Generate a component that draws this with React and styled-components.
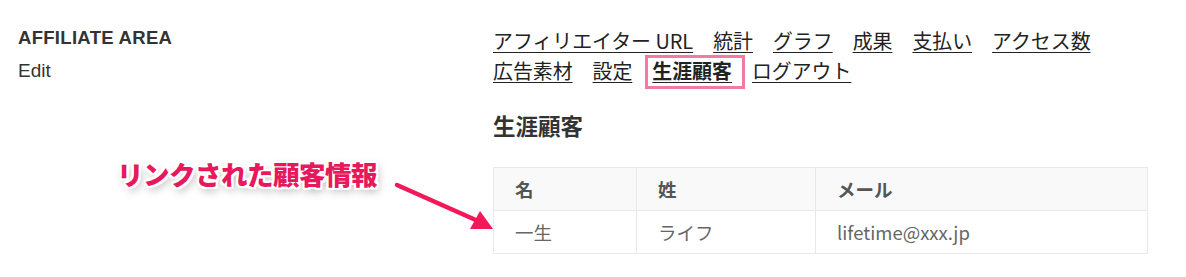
import React from 'react';
import styled, { createGlobalStyle } from 'styled-components';

const GlobalStyle = createGlobalStyle`
  html, body {
    margin: 0;
    padding: 0;
    background: #fff;
  }
  body {
    font-family: "Liberation Sans", "Noto Sans CJK JP", sans-serif;
    color: #333;
  }
  *, *::before, *::after {
    box-sizing: border-box;
  }
`;

const jp = `"Noto Sans CJK JP", "Liberation Sans", sans-serif`;

const Page = styled.div`
  position: relative;
  display: flex;
  width: 1186px;
  height: 277px;
  overflow: hidden;
`;

const Sidebar = styled.aside`
  width: 475px;
  flex-shrink: 0;
  margin-left: 18px;
  padding-top: 26px;
`;

const SideTitle = styled.h3`
  margin: 0;
  font-size: 18.5px;
  font-weight: 700;
  letter-spacing: 0.3px;
  line-height: 24px;
  color: #333;
`;

const SideLink = styled.div`
  margin-top: 9px;
  font-size: 19px;
  line-height: 24px;
  color: #333;
`;

const Main = styled.main`
  width: 654px;
  flex-shrink: 0;
  padding-top: 26px;
`;

const Nav = styled.nav`
  display: flex;
  flex-wrap: wrap;
  column-gap: 20px;
  width: 640px;
  font-family: ${jp};
  font-size: 19.9px;
  line-height: 30px;
`;

const NavLink = styled.a`
  position: relative;
  color: #222;
  text-decoration: underline;
  text-underline-offset: 3px;
  text-decoration-thickness: 1px;
  font-weight: ${({ $active }) => ($active ? 700 : 400)};

  &::after {
    content: '';
    display: ${({ $active }) => ($active ? 'block' : 'none')};
    position: absolute;
    left: -7px;
    right: -13px;
    top: -1px;
    bottom: -3px;
    border: 3px solid #f27aa3;
  }
`;

const Heading = styled.h2`
  margin: 23px 0 0;
  font-family: ${jp};
  font-size: 22.5px;
  font-weight: 700;
  line-height: 32px;
  color: #333;
`;

const Table = styled.table`
  margin-top: 26px;
  width: 654px;
  border-collapse: collapse;
  table-layout: fixed;
  font-family: ${jp};
  font-size: 18.5px;
`;

const Th = styled.th`
  width: ${({ $w }) => $w}px;
  height: 43px;
  padding: 0 0 0 21px;
  text-align: left;
  font-weight: 700;
  color: #555;
  background: #f9f9f9;
  border: 1px solid #e8e8e8;
`;

const Td = styled.td`
  height: 43px;
  padding: 0 0 0 21px;
  color: #666;
  border: 1px solid #e8e8e8;
`;

const Callout = styled.div`
  position: absolute;
  left: 117px;
  top: 157px;
  font-family: ${jp};
  font-size: 26.5px;
  font-weight: 900;
  line-height: 34px;
  color: #e8185c;
  letter-spacing: -0.5px;
  text-shadow:
    -2px 0 0 #fff, 2px 0 0 #fff, 0 -2px 0 #fff, 0 2px 0 #fff,
    -2px -2px 0 #fff, 2px 2px 0 #fff, -2px 2px 0 #fff, 2px -2px 0 #fff,
    2px 4px 8px rgba(0, 0, 0, 0.35);
`;

const Arrow = styled.svg`
  position: absolute;
  left: 390px;
  top: 178px;
`;

const links = [
  'アフィリエイター URL',
  '統計',
  'グラフ',
  '成果',
  '支払い',
  'アクセス数',
  '広告素材',
  '設定',
  '生涯顧客',
  'ログアウト',
];

export default function App() {
  return (
    <>
      <GlobalStyle />
      <Page>
        <Sidebar>
          <SideTitle>AFFILIATE AREA</SideTitle>
          <SideLink>Edit</SideLink>
        </Sidebar>
        <Main>
          <Nav>
            {links.map((l) => (
              <NavLink key={l} href="#" $active={l === '生涯顧客'}>
                {l}
              </NavLink>
            ))}
          </Nav>
          <Heading>生涯顧客</Heading>
          <Table>
            <thead>
              <tr>
                <Th $w={143}>名</Th>
                <Th $w={179}>姓</Th>
                <Th $w={332}>メール</Th>
              </tr>
            </thead>
            <tbody>
              <tr>
                <Td>一生</Td>
                <Td>ライフ</Td>
                <Td>lifetime@xxx.jp</Td>
              </tr>
            </tbody>
          </Table>
        </Main>
        <Callout>リンクされた顧客情報</Callout>
        <Arrow width="110" height="60" viewBox="0 0 110 60">
          <line x1="7" y1="7" x2="88" y2="43" stroke="#f2185a" strokeWidth="4.5" strokeLinecap="round" />
          <polygon points="103,51 80,51 90,33" fill="#f2185a" />
        </Arrow>
      </Page>
    </>
  );
}
